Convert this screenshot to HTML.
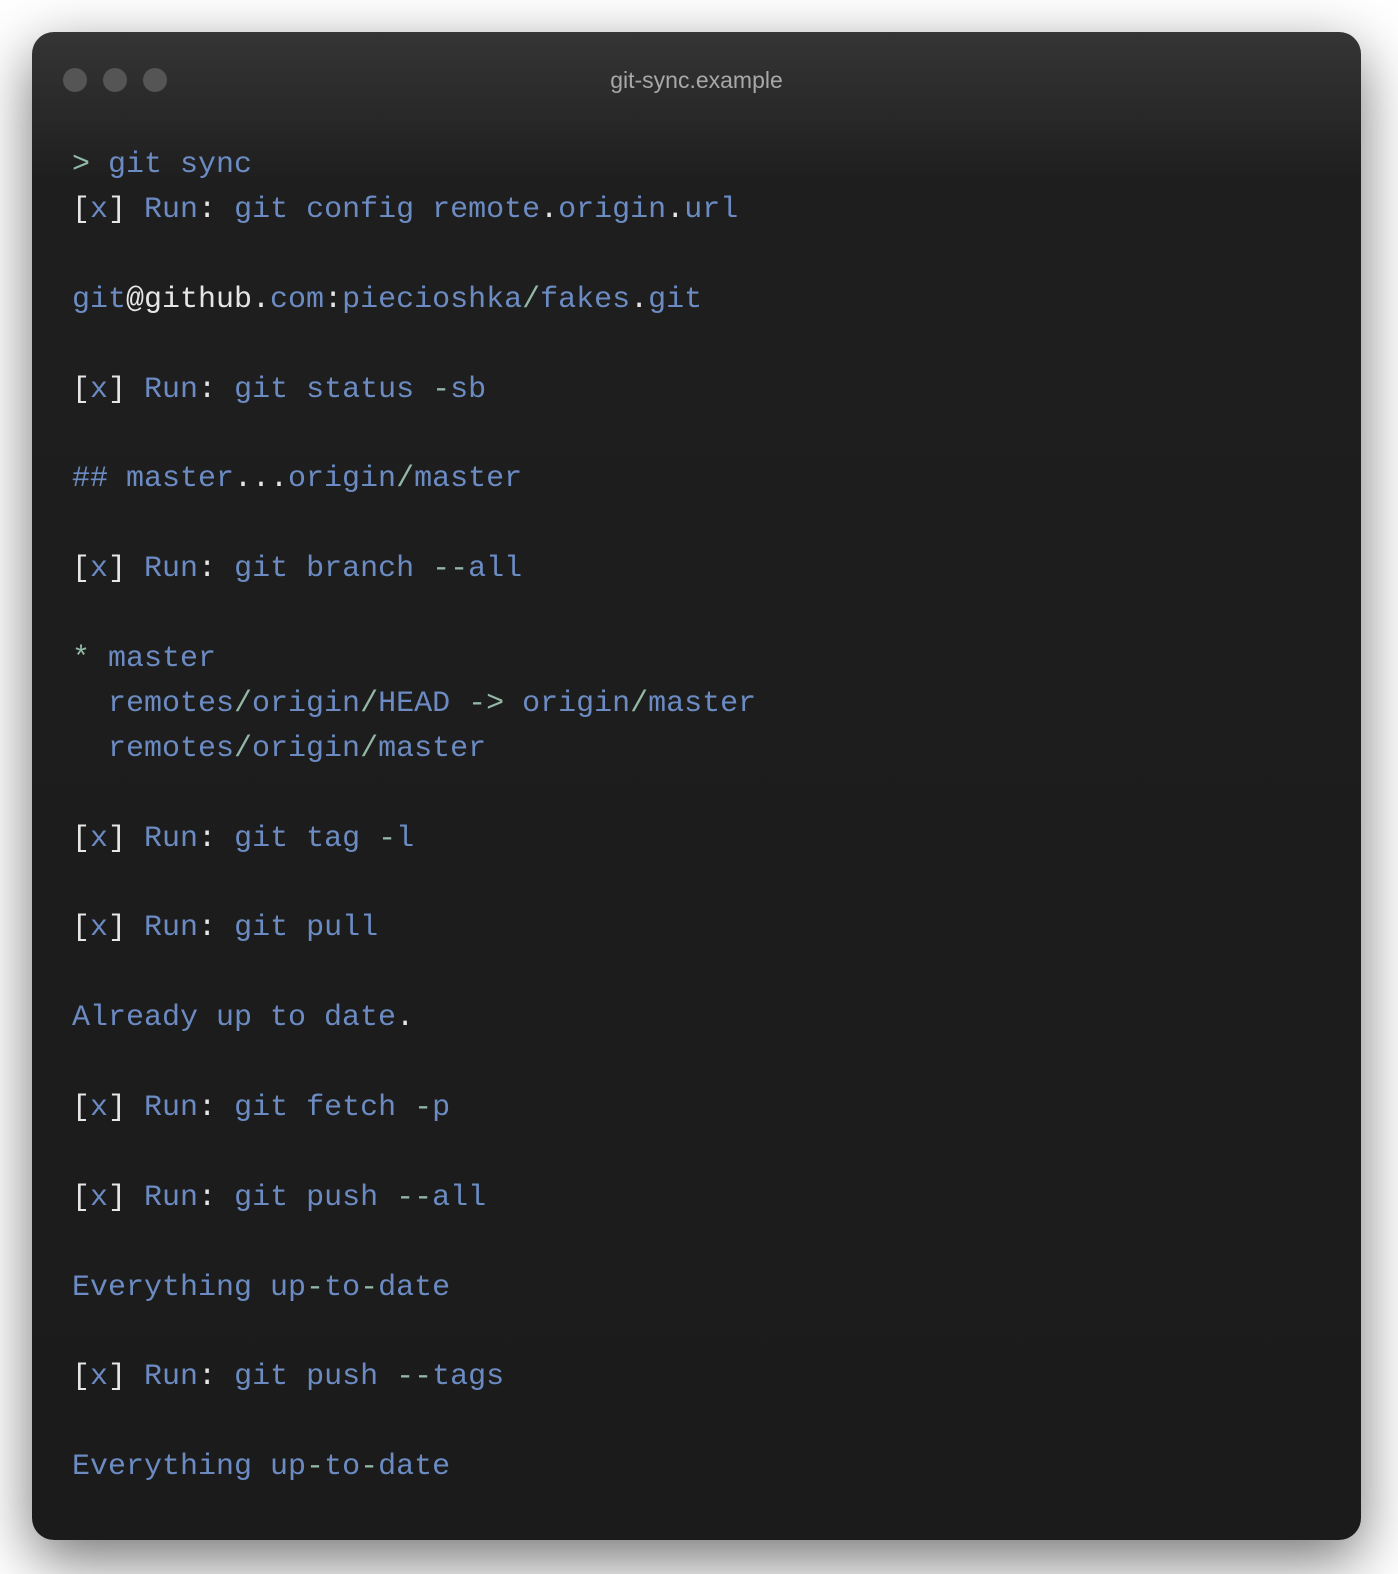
<!DOCTYPE html>
<html><head><meta charset="utf-8"><style>
html,body{margin:0;padding:0;background:#fff;width:1398px;height:1574px;overflow:hidden}
.win{position:absolute;left:32px;top:32px;width:1329px;height:1508px;border-radius:22px;
background:linear-gradient(#353535 0px,#1e1e1e 150px,#1b1b1b 100%);
box-shadow:0 20px 60px rgba(0,0,0,.55)}
.dot{position:absolute;top:36px;width:24px;height:24px;border-radius:50%;background:#555}
.title{position:absolute;top:35px;left:0;width:100%;text-align:center;font:23px "Liberation Sans",sans-serif;color:#a8a8a8}
pre{position:absolute;left:40px;top:111px;margin:0;font:30px/44.9px "Liberation Mono",monospace;color:#6b8bc2;white-space:pre}
.w{color:#e6e6e6}.g{color:#93b8a6}
</style></head><body>
<div class="win">
<div class="dot" style="left:31px"></div><div class="dot" style="left:71px"></div><div class="dot" style="left:111px"></div>
<div class="title">git-sync.example</div>
<pre><span class="g">&gt;</span> git sync
<span class="w">[</span>x<span class="w">]</span> Run<span class="w">:</span> git config remote<span class="w">.</span>origin<span class="w">.</span>url

git<span class="w">@github.</span>com<span class="w">:</span>piecioshka<span class="g">/</span>fakes<span class="w">.</span>git

<span class="w">[</span>x<span class="w">]</span> Run<span class="w">:</span> git status <span class="g">-</span>sb

## master<span class="w">...</span>origin<span class="g">/</span>master

<span class="w">[</span>x<span class="w">]</span> Run<span class="w">:</span> git branch <span class="g">--</span>all

<span class="g">*</span> master
  remotes<span class="g">/</span>origin<span class="g">/</span>HEAD <span class="g">-&gt;</span> origin<span class="g">/</span>master
  remotes<span class="g">/</span>origin<span class="g">/</span>master

<span class="w">[</span>x<span class="w">]</span> Run<span class="w">:</span> git tag <span class="g">-</span>l

<span class="w">[</span>x<span class="w">]</span> Run<span class="w">:</span> git pull

Already up to date<span class="w">.</span>

<span class="w">[</span>x<span class="w">]</span> Run<span class="w">:</span> git fetch <span class="g">-</span>p

<span class="w">[</span>x<span class="w">]</span> Run<span class="w">:</span> git push <span class="g">--</span>all

Everything up<span class="g">-</span>to<span class="g">-</span>date

<span class="w">[</span>x<span class="w">]</span> Run<span class="w">:</span> git push <span class="g">--</span>tags

Everything up<span class="g">-</span>to<span class="g">-</span>date</pre>
</div>
</body></html>
